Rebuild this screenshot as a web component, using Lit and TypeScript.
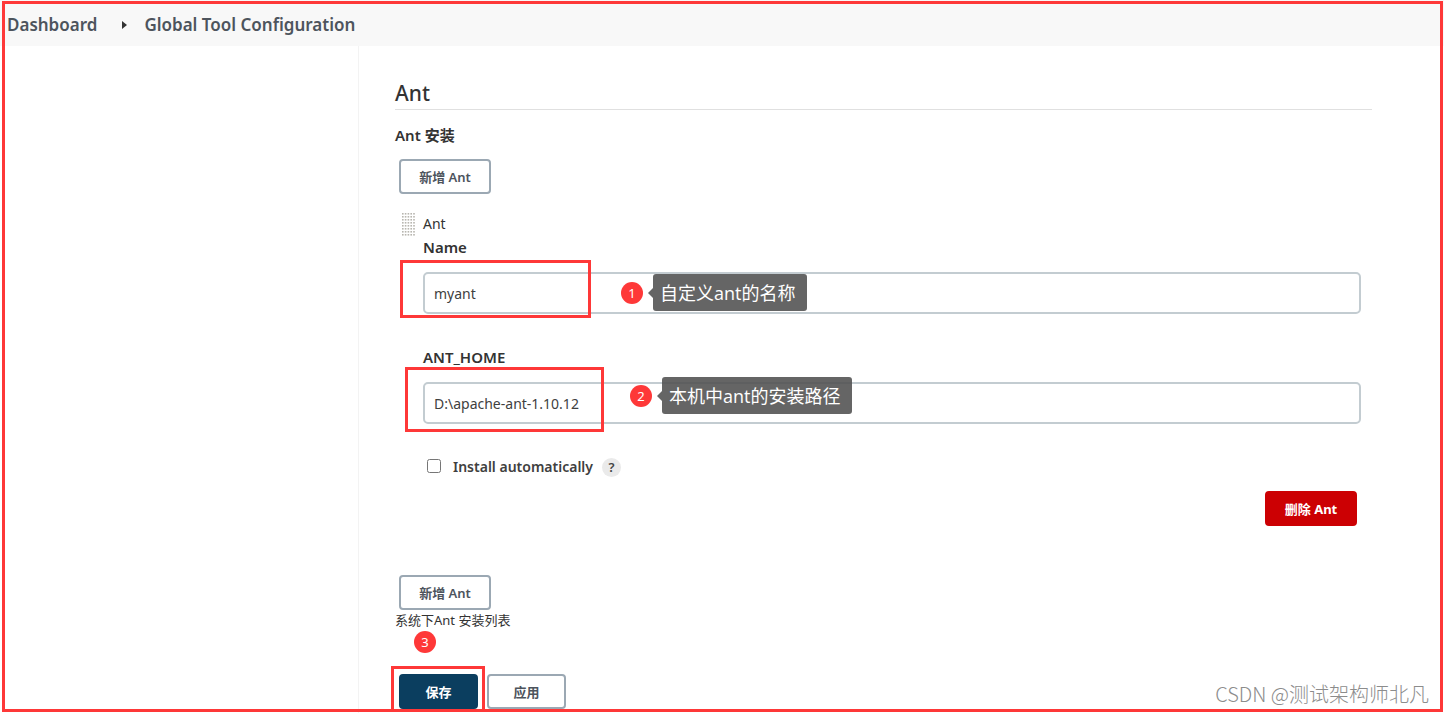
import { LitElement, html, css, svg } from "lit";
import { customElement, property } from "lit/decorators.js";

const RED = css`#fe3838`;
const FONT = css`"Noto Sans", "Noto Sans CJK SC", sans-serif`;

@customElement("step-badge")
export class StepBadge extends LitElement {
  @property({ type: Number }) step = 1;
  @property() note = "";

  static styles = css`
    :host {
      display: flex;
      align-items: center;
      gap: 10px;
      font-family: ${FONT};
    }
    .number {
      width: 22px;
      height: 22px;
      border-radius: 50%;
      background: ${RED};
      color: #fff;
      font-size: 13px;
      line-height: 22px;
      text-align: center;
    }
    .note {
      position: relative;
      padding: 1px 12px 0 7px;
      border-radius: 3px;
      background: rgba(80, 80, 80, 0.88);
      color: #fff;
      font: 18px/36px "Open Sans", "Noto Sans CJK SC", sans-serif;
      white-space: nowrap;
    }
    .note::before {
      content: "";
      position: absolute;
      left: -5px;
      top: 14px;
      border: solid transparent;
      border-width: 5px 5px 5px 0;
      border-right-color: rgba(80, 80, 80, 0.88);
    }
  `;

  render() {
    return html`<span class="number">${this.step}</span>
      ${this.note ? html`<span class="note">${this.note}</span>` : null}`;
  }
}

@customElement("app-root")
export class AppRoot extends LitElement {
  static styles = css`
    :host {
      display: flex;
      flex-direction: column;
      position: relative;
      box-sizing: border-box;
      min-height: 100vh;
      background: #fff;
      color: #333;
      font: 14px/20px ${FONT};
    }
    * {
      box-sizing: border-box;
    }
    .crumbs {
      display: flex;
      align-items: center;
      height: 46px;
      padding: 4px 7px 0;
      background: #f8f8f8;
      font-size: 17px;
      font-weight: 600;
    }
    .crumbs a {
      color: #4d545d;
      text-decoration: none;
    }
    .arrow {
      width: 5px;
      height: 8px;
      margin: 0 17px 0 25px;
    }
    .body {
      flex: 1;
      display: grid;
      grid-template-columns: 359px 1fr;
    }
    .side {
      border-right: 1px solid #f3f3f3;
    }
    main {
      padding: 32px 72px 0 36px;
    }
    h2 {
      margin: 0 0 15px;
      border-bottom: 1px solid #e0e0e0;
      font-size: 21px;
      line-height: 31px;
      font-weight: 500;
    }
    h3 {
      margin: 0 0 14px;
      font-size: 15px;
      line-height: 20px;
      font-weight: 600;
    }
    button {
      height: 35px;
      padding: 0 17px;
      border: 2px solid #9ba8b3;
      border-radius: 4px;
      background: #fff;
      color: #4d545d;
      font: 600 13px/20px ${FONT};
    }
    .add {
      display: block;
      min-width: 92px;
      margin-left: 4px;
    }
    .item {
      display: grid;
      grid-template-columns: 22px 1fr;
      margin: 18px 11px 0 6px;
    }
    .grip {
      width: 14px;
      height: 24px;
      margin: 1px 0 0 1px;
    }
    .kind {
      margin: 2px 0 3px;
    }
    .name {
      display: block;
      font-size: 15px;
      font-weight: 600;
    }
    .field {
      position: relative;
      margin: 15px 0 33px;
    }
    .text {
      display: block;
      width: 100%;
      height: 42px;
      padding: 0 9px;
      border: 2px solid #c3ccd1;
      border-radius: 5px;
      background: #fff;
      color: #404040;
      font: 14px/20px ${FONT};
      outline: none;
    }
    .mark {
      position: absolute;
      border: 3px solid ${RED};
      pointer-events: none;
    }
    .mark-name {
      inset: -12px auto -4px -23px;
      width: 191px;
    }
    .mark-home {
      inset: -15px auto -8px -18px;
      width: 199px;
    }
    .mark-save {
      inset: -8px -7px -3px -8px;
    }
    .mark-page {
      inset: 1px 1px 1px 2px;
    }
    .tip {
      position: absolute;
    }
    .tip-name {
      left: 198px;
      top: 2px;
    }
    .tip-home {
      left: 207px;
      top: -5px;
    }
    .check {
      display: flex;
      align-items: center;
      color: #404040;
      font-weight: 600;
    }
    .check input {
      width: 14px;
      height: 14px;
      margin: 0 12px 2px 4px;
    }
    .help {
      width: 19px;
      height: 19px;
      margin-left: 9px;
      border-radius: 50%;
      background: #eaeaea;
      color: #444;
      font-size: 13px;
      font-weight: 600;
      line-height: 19px;
      text-align: center;
      text-decoration: none;
    }
    .danger {
      justify-self: end;
      min-width: 92px;
      margin: 14px 4px 49px;
      border-color: #cc0003;
      background: #cc0003;
      color: #fff;
      font-weight: 700;
    }
    .hint {
      position: relative;
      margin: 0 0 44px;
      font-size: 13px;
    }
    .tip-save {
      left: 19px;
      top: 21px;
    }
    .actions {
      display: flex;
      gap: 9px;
      margin-left: 4px;
    }
    .actions button {
      min-width: 79px;
    }
    .save {
      position: relative;
    }
    .save button {
      border-color: #0b3e5f;
      background: #0b3e5f;
      color: #fff;
      font-weight: 700;
    }
    .watermark {
      position: absolute;
      right: 15px;
      bottom: 6px;
      color: #8c8c8c;
      font: 300 20px/26px "Noto Sans CJK SC", sans-serif;
    }
  `;

  private field(id: string, label: string, value: string, kind: string, step: number, note: string) {
    return html`<label class="name" for=${id}>${label}</label>
      <div class="field">
        <input class="text" id=${id} type="text" .value=${value} />
        <span class="mark mark-${kind}"></span>
        <step-badge class="tip tip-${kind}" .step=${step} .note=${note}></step-badge>
      </div>`;
  }

  private grip() {
    const dots = [];
    for (let y = 0; y < 8; y++)
      for (let x = 0; x < 5; x++) dots.push(svg`<rect x=${x * 2.8} y=${y * 3} width="1.6" height="1.6" fill="#b8b6b0" />`);
    return html`<svg class="grip" viewBox="0 0 14 24">${dots}</svg>`;
  }

  render() {
    return html`
      <nav class="crumbs">
        <a href="#">Dashboard</a>
        <svg class="arrow" viewBox="0 0 5 8"><path d="M0 0 5 4 0 8Z" fill="#333" /></svg>
        <a href="#">Global Tool Configuration</a>
      </nav>
      <div class="body">
        <aside class="side"></aside>
        <main>
          <h2>Ant</h2>
          <h3>Ant 安装</h3>
          <button class="add" type="button">新增 Ant</button>
          <section class="item">
            ${this.grip()}
            <div>
              <div class="kind">Ant</div>
              ${this.field("name", "Name", "myant", "name", 1, "自定义ant的名称")}
              ${this.field("home", "ANT_HOME", "D:\\apache-ant-1.10.12", "home", 2, "本机中ant的安装路径")}
              <div class="check">
                <input id="auto" type="checkbox" /><label for="auto">Install automatically</label>
                <a class="help" href="#" aria-label="Help">?</a>
              </div>
            </div>
            <span></span>
            <button class="danger" type="button">删除 Ant</button>
          </section>
          <button class="add" type="button">新增 Ant</button>
          <div class="hint">系统下Ant 安装列表<step-badge class="tip tip-save" .step=${3}></step-badge></div>
          <div class="actions">
            <div class="save"><button type="button">保存</button><span class="mark mark-save"></span></div>
            <button type="button">应用</button>
          </div>
        </main>
      </div>
      <div class="watermark">CSDN @测试架构师北凡</div>
      <div class="mark mark-page"></div>
    `;
  }
}
